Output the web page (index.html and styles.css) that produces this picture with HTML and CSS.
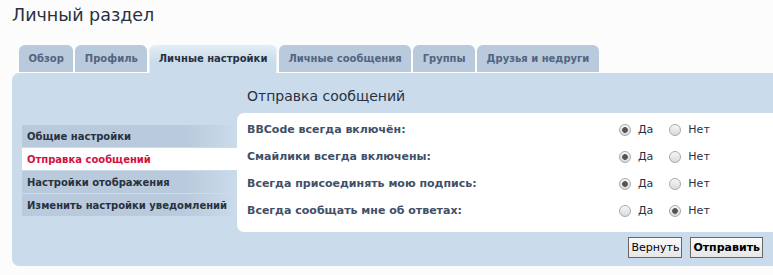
FILE: index.html
```html
<!DOCTYPE html>
<html lang="ru">
<head>
<meta charset="utf-8">
<title>Личный раздел</title>
<link rel="stylesheet" href="styles.css">
</head>
<body>
<h2 class="page-title">Личный раздел</h2>

<ul class="tabs">
	<li><a href="">Обзор</a></li>
	<li><a href="">Профиль</a></li>
	<li class="active"><a href="">Личные настройки</a></li>
	<li><a href="">Личные сообщения</a></li>
	<li><a href="">Группы</a></li>
	<li><a href="">Друзья и недруги</a></li>
</ul>

<div class="panel">
	<ul class="side-menu">
		<li><a href="">Общие настройки</a></li>
		<li class="active"><a href="">Отправка сообщений</a></li>
		<li><a href="">Настройки отображения</a></li>
		<li><a href="">Изменить настройки уведомлений</a></li>
	</ul>

	<div class="main">
		<h3 class="main-title">Отправка сообщений</h3>
		<div class="box">
			<div class="row">
				<span class="label">BBCode всегда включён:</span>
				<div class="choices">
					<label><input type="radio" name="bbcode" checked>Да</label>
					<label><input type="radio" name="bbcode">Нет</label>
				</div>
			</div>
			<div class="row">
				<span class="label">Смайлики всегда включены:</span>
				<div class="choices">
					<label><input type="radio" name="smilies" checked>Да</label>
					<label><input type="radio" name="smilies">Нет</label>
				</div>
			</div>
			<div class="row">
				<span class="label">Всегда присоединять мою подпись:</span>
				<div class="choices">
					<label><input type="radio" name="sig" checked>Да</label>
					<label><input type="radio" name="sig">Нет</label>
				</div>
			</div>
			<div class="row">
				<span class="label">Всегда сообщать мне об ответах:</span>
				<div class="choices">
					<label><input type="radio" name="notify">Да</label>
					<label><input type="radio" name="notify" checked>Нет</label>
				</div>
			</div>
		</div>
		<div class="buttons">
			<button type="button" class="btn">Вернуть</button>
			<button type="button" class="btn btn-main">Отправить</button>
		</div>
	</div>
</div>
</body>
</html>
```

FILE: styles.css
```css
* {margin:0; padding:0; box-sizing:border-box}
body {background:#fcfcfc; font-family:"DejaVu Sans", Verdana, sans-serif; font-size:11px; color:#28313f; overflow:hidden}
li {list-style:none}
a {text-decoration:none}

.page-title {font-size:17.5px; font-weight:normal; color:#28313f; padding:5px 0 0 12px; height:45px}

/* tabs */
.tabs {display:flex; gap:2px; padding-left:19px; height:28px}
.tabs li a {display:block; height:27px; line-height:28px; padding:0 9.5px; background:#b8cadb; color:#536482; font-size:10px; font-weight:bold; border-radius:6px 6px 0 0}
.tabs li.active a {height:28px; color:#28313f; background:linear-gradient(#e2ecf4, #cadceb 60%); border:1px solid #e6eef5; border-bottom:0; padding:0 8.5px; line-height:26px}

/* panel */
.panel {display:flex; margin-left:12px; background:#cadceb; border-radius:7px 0 0 7px; height:193px; padding-left:10px}

.side-menu {width:215px; padding-top:52px}
.side-menu li {margin-bottom:1px}
.side-menu li a {display:block; height:22px; line-height:23px; padding-left:5px; font-size:10px; font-weight:bold; color:#28313f; background:linear-gradient(to right, #b8cadb 75%, #cadceb)}
.side-menu li.active a {background:#fff; color:#d31141}

.main {flex:1}
.main-title {font-size:14px; font-weight:normal; color:#28313f; padding:15px 0 0 10px; height:40px}
.box {background:#fff; border-radius:7px 0 0 7px; padding:3px 0 8px}
.row {display:flex; height:27px; align-items:center}
.label {width:382px; padding-left:10px; font-weight:bold; color:#425067}
.choices {display:flex; align-items:center; color:#28313f}
.choices label {display:flex; align-items:center; margin-right:16px}
.choices input {appearance:none; width:12px; height:12px; margin:1px 7px 0 0; border:1px solid #a9a9a9; border-radius:50%; background:linear-gradient(#f6f6f6, #dadada)}
.choices input:checked {background:radial-gradient(circle, #555 2.5px, transparent 3.2px), linear-gradient(#f6f6f6, #dadada)}

.buttons {display:flex; justify-content:flex-end; gap:8px; padding:5px 10px 0 0}
.btn {height:21px; padding:0 2px; font-family:"DejaVu Sans", Verdana, sans-serif; font-size:11px; color:#000; background:linear-gradient(#fafafa, #e6e6e6); border:1px solid #666}
.btn-main {font-weight:bold}
```
